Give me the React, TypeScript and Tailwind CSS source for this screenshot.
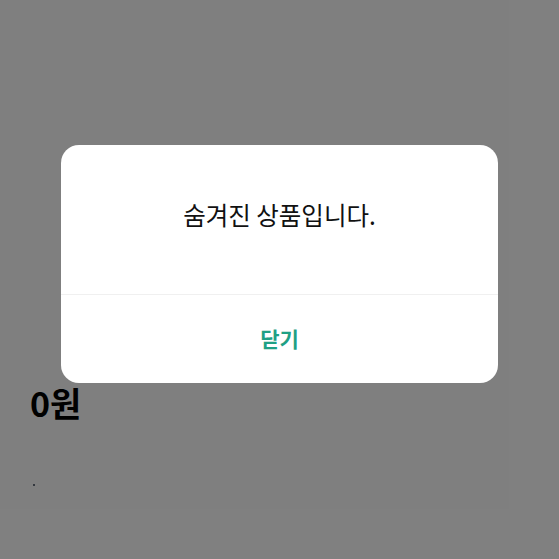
import React from "react";

const App = () => {
  return (
    <div
      className="relative h-[559px] w-[559px] overflow-hidden bg-white"
      style={{ fontFamily: '"Noto Sans CJK KR", "Noto Sans", sans-serif' }}
    >
      {/* page underneath */}
      <div className="flex flex-col px-[30px] pt-[380px]">
        <div className="text-[34px] font-bold leading-[46px] text-black">0원</div>
        <div className="mt-[58px] ml-[3px] h-[2px] w-[2px] rounded-full bg-gray-700" />
      </div>

      {/* dim overlay + dialog */}
      <div className="absolute inset-0 flex flex-col items-center bg-black/50 pt-[145px]">
        <div className="flex w-[437px] flex-col overflow-hidden rounded-[18px] bg-white">
          <div className="flex h-[149px] items-center justify-center pb-[8px]">
            <p className="text-[24.5px] leading-none text-[#111]">숨겨진 상품입니다.</p>
          </div>
          <div className="h-px bg-[#f0f0f0]" />
          <button className="flex h-[88px] items-center justify-center text-[21px] font-bold text-[#1fa085]">
            닫기
          </button>
        </div>
      </div>
    </div>
  );
};

export default App;
